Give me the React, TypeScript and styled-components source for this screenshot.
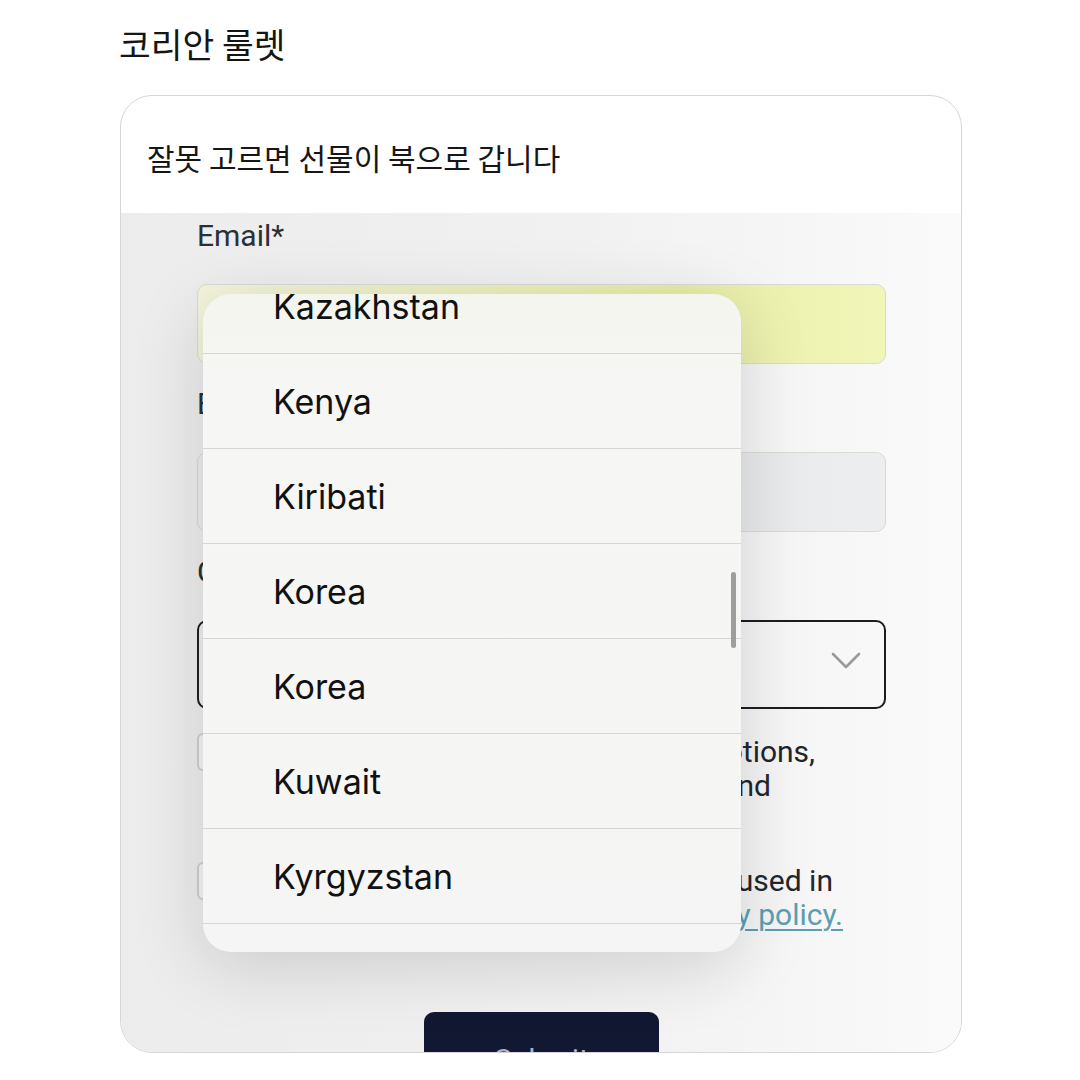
import React from 'react';
import styled, { createGlobalStyle } from 'styled-components';

const GlobalStyle = createGlobalStyle`
  html, body {
    margin: 0;
    padding: 0;
    background: #fff;
  }
  body {
    font-family: "Noto Sans CJK KR", "Noto Sans", sans-serif;
    color: #111;
  }
`;

const Page = styled.div`
  width: 1080px;
  height: 1080px;
  overflow: hidden;
  box-sizing: border-box;
  padding: 23px 0 0 119px;
`;

const Title = styled.h1`
  margin: 0;
  height: 40px;
  font-size: 34.5px;
  line-height: 40px;
  font-weight: 400;
  color: #151515;
`;

const Card = styled.div`
  margin-top: 32px;
  margin-left: 1px;
  width: 842px;
  height: 958px;
  box-sizing: border-box;
  border: 1.5px solid #d6d6d6;
  border-radius: 32px;
  overflow: hidden;
  display: flex;
  flex-direction: column;
`;

const CardHeader = styled.div`
  flex: none;
  height: 117px;
  box-sizing: border-box;
  padding: 42px 0 0 26px;
  font-size: 30px;
  line-height: 38px;
  color: #161616;
`;

const Shot = styled.div`
  flex: 1;
  position: relative;
  overflow: hidden;
  display: flex;
  flex-direction: column;
  padding: 5px 75px 0 76px;
  background: linear-gradient(90deg, #ececec 0%, #f1f1f1 55%, #fafafa 100%);
  font-family: Roboto, "Liberation Sans", sans-serif;
  color: #2b2f36;
`;

const Fields = styled.div`
  display: flex;
  flex-direction: column;
  gap: 22px;
`;

const Field = styled.div`
  display: flex;
  flex-direction: column;
  gap: 30px;
`;

const Label = styled.div`
  height: 36px;
  font-size: 30px;
  line-height: 36px;
  white-space: nowrap;
`;

const Input = styled.div<{ $tone: 'filled' | 'plain' }>`
  height: 80px;
  box-sizing: border-box;
  border: 1.5px solid #d9d9d6;
  border-radius: 10px;
  background: ${(p) =>
    p.$tone === 'filled'
      ? 'linear-gradient(90deg, #f3f4dc 0%, #e9eda8 70%, #f1f6b9 100%)'
      : 'linear-gradient(90deg, #ececec 0%, #e6e7e9 70%, #edeef0 100%)'};
`;

const Select = styled.div`
  height: 89px;
  box-sizing: border-box;
  border: 2px solid #1b1d22;
  border-radius: 10px;
  display: flex;
  align-items: center;
  justify-content: flex-end;
  padding: 0 23px 8px 0;
`;

const Consent = styled.div<{ $gap: number }>`
  display: flex;
  align-items: flex-start;
  gap: 16px;
  margin-top: ${(p) => p.$gap}px;
`;

const Checkbox = styled.div`
  flex: none;
  width: 38px;
  height: 38px;
  box-sizing: border-box;
  border: 2px solid #cfcfcf;
  border-radius: 6px;
  background: #f5f5f5;
`;

const ConsentText = styled.div<{ $width: number }>`
  width: ${(p) => p.$width}px;
  overflow: hidden;
  padding-top: 2px;
  display: flex;
  flex-direction: column;
  font-size: 30px;
  line-height: 34px;
  color: #22262d;
`;

const ConsentLine = styled.div<{ $trim?: number }>`
  white-space: nowrap;
  text-align: right;
  padding-right: ${(p) => p.$trim ?? 0}px;
`;

const Link = styled.span`
  color: #5b9fb3;
  text-decoration: underline;
  text-underline-offset: 4px;
  text-decoration-thickness: 2px;
`;

const Submit = styled.div`
  align-self: center;
  margin-top: 80px;
  flex: none;
  width: 235px;
  height: 96px;
  border-radius: 10px;
  background: #121832;
  color: #a9b3cb;
  font-size: 30px;
  line-height: 96px;
  text-align: center;
`;

const Picker = styled.div`
  position: absolute;
  left: 82px;
  top: 81px;
  width: 538px;
  height: 658px;
  border-radius: 28px;
  overflow: hidden;
  background: linear-gradient(180deg, #f4f5ee 0px, #f6f6f4 90px, #f5f5f5 100%);
  box-shadow: 0 14px 70px rgba(0, 0, 0, 0.15);
  font-family: Inter, "Liberation Sans", sans-serif;
`;

const PickerList = styled.div`
  margin-top: -35px;
  display: flex;
  flex-direction: column;
`;

const PickerRow = styled.div`
  height: 95px;
  box-sizing: border-box;
  border-bottom: 1px solid #d5d5d5;
  padding-left: 70px;
  display: flex;
  align-items: center;
  font-size: 34px;
  color: #111;
`;

const ScrollThumb = styled.div`
  position: absolute;
  right: 5px;
  top: 278px;
  width: 5px;
  height: 76px;
  border-radius: 3px;
  background: #9e9e9e;
`;

const countries = ['Kazakhstan', 'Kenya', 'Kiribati', 'Korea', 'Korea', 'Kuwait', 'Kyrgyzstan', 'Laos'];

const Chevron = () => (
  <svg width="30" height="18" viewBox="0 0 30 18" fill="none">
    <path d="M2 2 L15 15 L28 2" stroke="#9a9a9a" strokeWidth="2.6" strokeLinecap="round" strokeLinejoin="round" />
  </svg>
);

const App = () => (
  <Page>
    <GlobalStyle />
    <Title>코리안 룰렛</Title>
    <Card>
      <CardHeader>잘못 고르면 선물이 북으로 갑니다</CardHeader>
      <Shot>
        <Fields>
          <Field>
            <Label>Email*</Label>
            <Input $tone="filled" />
          </Field>
          <Field>
            <Label>Email confirmation*</Label>
            <Input $tone="plain" />
          </Field>
          <Field>
            <Label>Country*</Label>
            <Select>
              <Chevron />
            </Select>
          </Field>
        </Fields>
        <Consent $gap={24}>
          <Checkbox />
          <ConsentText $width={564}>
            <ConsentLine>I would like to receive news, promotions,</ConsentLine>
            <ConsentLine $trim={44}>offers and updates by email and</ConsentLine>
          </ConsentText>
        </Consent>
        <Consent $gap={59}>
          <Checkbox />
          <ConsentText $width={592}>
            <ConsentLine $trim={10}>I consent to my data being used in</ConsentLine>
            <ConsentLine>
              accordance with the <Link>privacy policy.</Link>
            </ConsentLine>
          </ConsentText>
        </Consent>
        <Submit>Submit</Submit>
        <Picker>
          <PickerList>
            {countries.map((c, i) => (
              <PickerRow key={i}>{c}</PickerRow>
            ))}
          </PickerList>
          <ScrollThumb />
        </Picker>
      </Shot>
    </Card>
  </Page>
);

export default App;
